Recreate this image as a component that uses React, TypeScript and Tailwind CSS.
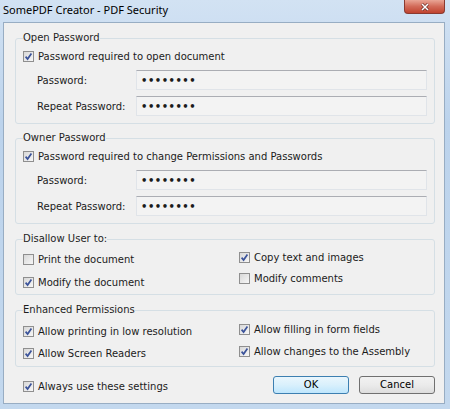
import React from 'react';

type CheckProps = {
  label: string
  checked?: boolean
  className?: string
}

function Check({ label, checked = false, className = '' }: CheckProps) {
  return (
    <div className={`flex items-center h-[14px] ${className}`}>
      <span className="relative w-[11px] h-[11px] border border-[#8f8f8f] bg-[linear-gradient(135deg,#d8d8d8,#f7f7f7)] shrink-0">
        {checked && (
          <svg viewBox="0 0 11 11" className="absolute -left-px -top-px w-[11px] h-[11px]">
            <path d="M2.6 5.6 L4.6 8 L8.4 2.6" fill="none" stroke="#3b539a" strokeWidth="1.7" />
          </svg>
        )}
      </span>
      <span className="ml-[4px] whitespace-nowrap">{label}</span>
    </div>
  );
}

function PasswordRow({ label, className = '' }: { label: string; className?: string }) {
  return (
    <div className={`flex items-center pl-[14px] ${className}`}>
      <span className="w-[99px] shrink-0">{label}</span>
      <div className="flex-1 h-[20px] flex items-center pl-[4px] bg-[#f3f3f3] border border-[#e0e4e9] border-t-[#abadb3] font-bold text-[10px] tracking-[0.5px]">
        ••••••••
      </div>
    </div>
  );
}

function Group({ title, children, className = '' }: { title: string; children: React.ReactNode; className?: string }) {
  return (
    <fieldset className={`border border-[#d5dfe5] rounded-[3px] px-[7px] ${className}`}>
      <legend className="leading-[12px] px-0 text-[#1e1e1e]">{title}</legend>
      {children}
    </fieldset>
  );
}

export default function App() {
  return (
    <div
      className="w-[450px] h-[409px] bg-[linear-gradient(180deg,#d2e2f3,#bcd3ec_30%,#c3d8ee)] flex flex-col text-[10px] text-[#1b1b1b]"
      style={{ fontFamily: '"DejaVu Sans", Verdana, sans-serif' }}
    >
      <div className="h-[22px] flex justify-between items-start pl-[3px] pr-[5px]">
        <span className="mt-[3px] text-[11px] leading-[14px] text-black" style={{ fontFamily: '"Noto Sans", sans-serif' }}>
          SomePDF Creator - PDF Security
        </span>
        <div className="w-[41px] h-[14px] rounded-b-[4px] border border-t-0 border-[#8a3a30] bg-[linear-gradient(180deg,#e9a595,#d26a58_50%,#c0432f)] flex items-center justify-center">
          <svg viewBox="0 0 10 8" className="w-[10px] h-[8px]">
            <path d="M2 1 L8 7 M8 1 L2 7" stroke="#5a1a14" strokeWidth="2.6" />
            <path d="M2 1 L8 7 M8 1 L2 7" stroke="#ffffff" strokeWidth="1.6" />
          </svg>
        </div>
      </div>

      <div className="ml-[3px] w-[442px] h-[382px] border border-[#98adc3] bg-[#f0f0f0] pl-[11px] pr-[9px] pt-[9px] flex flex-col">
        <Group title="Open Password" className="pb-[7px]">
          <Check label="Password required to open document" checked className="mt-[5px]" />
          <PasswordRow label="Password:" className="mt-[7px]" />
          <PasswordRow label="Repeat Password:" className="mt-[6px]" />
        </Group>

        <Group title="Owner Password" className="mt-[8px] pb-[7px]">
          <Check label="Password required to change Permissions and Passwords" checked className="mt-[5px]" />
          <PasswordRow label="Password:" className="mt-[7px]" />
          <PasswordRow label="Repeat Password:" className="mt-[6px]" />
        </Group>

        <Group title="Disallow User to:" className="mt-[9px] pb-[5px]">
          <div className="flex">
            <div className="w-[216px] flex flex-col">
              <Check label="Print the document" className="mt-[7px]" />
              <Check label="Modify the document" checked className="mt-[9px]" />
            </div>
            <div className="flex flex-col">
              <Check label="Copy text and images" checked className="mt-[5px]" />
              <Check label="Modify comments" className="mt-[7px]" />
            </div>
          </div>
        </Group>

        <Group title="Enhanced Permissions" className="mt-[9px] pb-[6px]">
          <div className="flex">
            <div className="w-[216px] flex flex-col">
              <Check label="Allow printing in low resolution" checked className="mt-[8px]" />
              <Check label="Allow Screen Readers" checked className="mt-[8px]" />
            </div>
            <div className="flex flex-col">
              <Check label="Allow filling in form fields" checked className="mt-[6px]" />
              <Check label="Allow changes to the Assembly" checked className="mt-[8px]" />
            </div>
          </div>
        </Group>

        <div className="mt-[9px] h-[18px] flex justify-between items-center pl-[8px]">
          <Check label="Always use these settings" checked className="mt-[3px]" />
          <div className="flex gap-[10px]">
            <button className="w-[76px] h-[18px] rounded-[3px] border border-[#3c7fb1] bg-[linear-gradient(180deg,#eaf6fd,#d9f0fc_50%,#bee6fd)] text-black leading-[16px]">
              OK
            </button>
            <button className="w-[76px] h-[18px] rounded-[3px] border border-[#707070] bg-[linear-gradient(180deg,#f2f2f2,#ebebeb_50%,#dddddd)] text-black leading-[16px]">
              Cancel
            </button>
          </div>
        </div>
      </div>
    </div>
  );
}
